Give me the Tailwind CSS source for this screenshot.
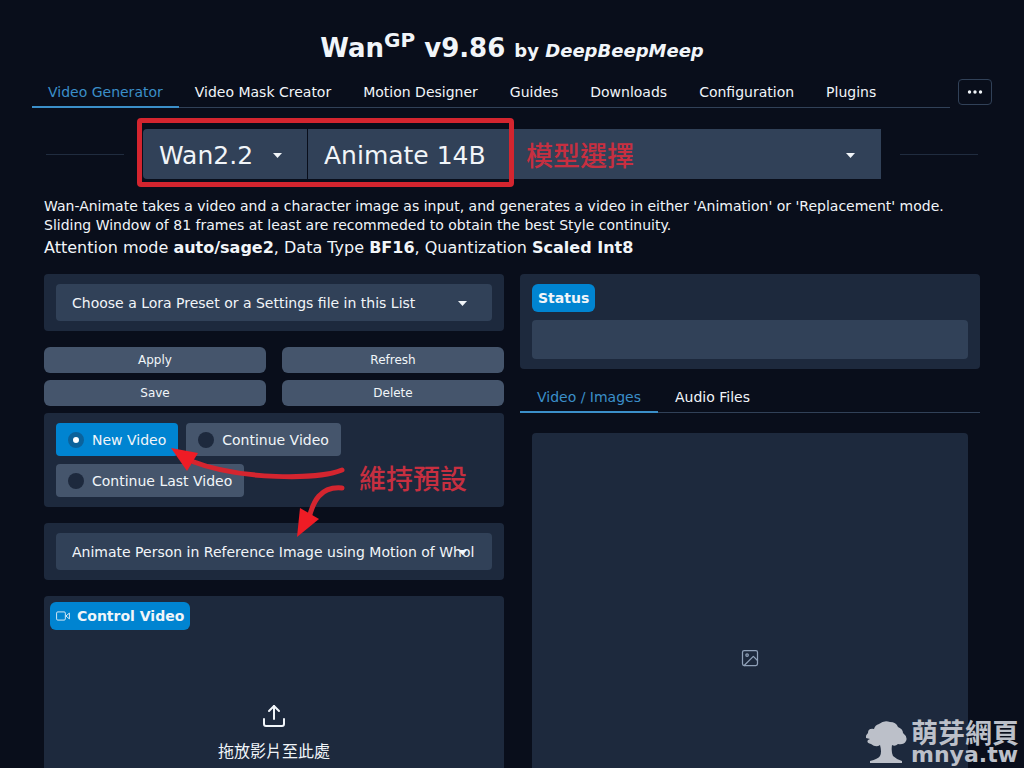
<!DOCTYPE html>
<html lang="zh-Hant">
<head>
  <meta charset="UTF-8">
  <meta name="viewport" content="width=device-width, initial-scale=1.0">
  <title>WanGP</title>
  <script src="https://cdn.jsdelivr.net/npm/@tailwindcss/browser@4"></script>
</head>
<body class="relative h-screen overflow-hidden bg-[#090e1b] px-8 font-['DejaVu_Sans','Noto_Sans_CJK_TC',sans-serif] text-sm text-slate-100">

  <h1 class="pt-8 text-center text-[26px] leading-8 font-bold">
    Wan<sup class="text-xl leading-none">GP</sup> v9.86 <span class="text-lg">by <i>DeepBeepMeep</i></span>
  </h1>

  <!-- main tabs -->
  <div class="mt-[11px] flex items-start gap-2">
    <nav class="flex h-8 flex-1 border-b border-slate-700 whitespace-nowrap">
      <button class="h-8 px-4 text-[#3b8fc9] shadow-[inset_0_-2px_0_#3b8fc9]">Video Generator</button>
      <button class="h-8 px-4">Video Mask Creator</button>
      <button class="h-8 px-4">Motion Designer</button>
      <button class="h-8 px-4">Guides</button>
      <button class="h-8 px-4">Downloads</button>
      <button class="h-8 px-4">Configuration</button>
      <button class="h-8 px-4">Plugins</button>
    </nav>
    <button class="mt-[3px] flex h-[26px] w-[34px] items-center justify-center rounded border border-slate-700" aria-label="More tabs">
      <svg class="h-4 w-4" viewBox="0 0 16 16" fill="currentColor"><circle cx="2.5" cy="8" r="1.7"/><circle cx="8" cy="8" r="1.7"/><circle cx="13.5" cy="8" r="1.7"/></svg>
    </button>
  </div>

  <main class="px-3">
    <!-- model choice -->
    <div class="mt-[21px] flex items-center">
      <hr class="ml-[2px] w-[78px] border-slate-700/60">
      <div class="relative ml-[19px] flex h-[50px] flex-1 gap-px text-[25px]">
        <div class="relative w-[164px]">
          <select aria-label="Model family" class="h-full w-full appearance-none rounded-l bg-slate-700 pt-1 pl-4">
            <option>Wan2.2</option>
          </select>
          <svg class="pointer-events-none absolute top-6 right-[25px] h-[5px] w-[9px]" viewBox="0 0 9 5" fill="currentColor"><path d="M0 0h9L4.500 5z"/></svg>
        </div>
        <div class="relative flex-1">
          <select aria-label="Model" class="h-full w-full appearance-none bg-slate-700 pt-1 pl-4">
            <option>Animate 14B</option>
          </select>
          <svg class="pointer-events-none absolute top-6 right-[26px] h-[5px] w-[9px]" viewBox="0 0 9 5" fill="currentColor"><path d="M0 0h9L4.500 5z"/></svg>
        </div>
        <div class="pointer-events-none absolute -top-[11px] -left-[6px] h-[69px] w-[377px] rounded border-[5px] border-[#d4252f]"></div>
        <span class="absolute top-2 left-[383px] text-[27px] leading-10 font-medium text-[#c72f40]">模型選擇</span>
      </div>
      <hr class="mr-[2px] ml-[19px] w-[78px] border-slate-700/60">
    </div>

    <p class="mt-[18px] leading-[19px]">Wan-Animate takes a video and a character image as input, and generates a video in either 'Animation' or 'Replacement' mode.<br>Sliding Window of 81 frames at least are recommeded to obtain the best Style continuity.</p>
    <p class="text-base leading-[25px]">Attention mode <b>auto/sage2</b>, Data Type <b>BF16</b>, Quantization <b>Scaled Int8</b></p>

    <div class="mt-[14px] grid grid-cols-2 items-start gap-4">
      <!-- settings column -->
      <div class="relative">
        <div class="rounded bg-slate-800 px-3 py-[10px]">
          <div class="relative">
            <select aria-label="Lora preset" class="h-[37px] w-full appearance-none rounded bg-slate-700 px-4">
              <option>Choose a Lora Preset or a Settings file in this List</option>
            </select>
            <svg class="pointer-events-none absolute top-[17px] right-[25px] h-[5px] w-[9px]" viewBox="0 0 9 5" fill="currentColor"><path d="M0 0h9L4.500 5z"/></svg>
          </div>
        </div>

        <div class="mt-4 grid grid-cols-2 gap-x-4 gap-y-[7px] text-xs">
          <button class="h-[26px] rounded-md bg-slate-600">Apply</button>
          <button class="h-[26px] rounded-md bg-slate-600">Refresh</button>
          <button class="h-[26px] rounded-md bg-slate-600">Save</button>
          <button class="h-[26px] rounded-md bg-slate-600">Delete</button>
        </div>

        <div class="mt-[7px] flex flex-wrap gap-2 rounded bg-slate-800 px-3 py-[10px]">
          <label class="flex h-[33px] items-center gap-2 rounded bg-sky-600 px-3">
            <input type="radio" name="start" checked class="h-4 w-4 appearance-none rounded-full border-[5px] border-[#0b629b] bg-white">New Video
          </label>
          <label class="flex h-[33px] items-center gap-2 rounded bg-slate-600 px-3">
            <input type="radio" name="start" class="h-4 w-4 appearance-none rounded-full bg-slate-800">Continue Video
          </label>
          <label class="flex h-[33px] items-center gap-2 rounded bg-slate-600 px-3">
            <input type="radio" name="start" class="h-4 w-4 appearance-none rounded-full bg-slate-800">Continue Last Video
          </label>
        </div>

        <div class="mt-4 rounded bg-slate-800 px-3 py-[10px]">
          <div class="relative">
            <select aria-label="Control process" class="h-[37px] w-full appearance-none rounded bg-slate-700 px-4">
              <option>Animate Person in Reference Image using Motion of Whol</option>
            </select>
            <svg class="pointer-events-none absolute top-[17px] right-[25px] h-[5px] w-[9px]" viewBox="0 0 9 5" fill="currentColor"><path d="M0 0h9L4.500 5z"/></svg>
          </div>
        </div>

        <div class="mt-4 rounded bg-slate-800 p-[6px] pb-24">
          <div class="flex h-7 w-fit items-center gap-[7px] rounded-md bg-sky-600 px-[6px] font-bold">
            <svg class="h-[14px] w-[14px]" viewBox="0 0 24 24" fill="none" stroke="currentColor" stroke-width="1.500" stroke-linejoin="round"><rect x="1" y="5" width="15" height="14" rx="2"/><path d="M23 7l-6 5 6 5z"/></svg>
            Control Video
          </div>
          <button class="mx-auto mt-[74px] flex flex-col items-center gap-3 text-base leading-6">
            <svg class="h-6 w-6" viewBox="0 0 24 24" fill="none" stroke="currentColor" stroke-width="2" stroke-linecap="round" stroke-linejoin="round"><path d="M2 15v5a2 2 0 0 0 2 2h16a2 2 0 0 0 2-2v-5"/><path d="M17 7l-5-5-5 5"/><path d="M12 2v13"/></svg>
            拖放影片至此處
          </button>
        </div>

        <!-- hand-drawn notes over the settings -->
        <svg class="pointer-events-none absolute top-[166px] left-[120px] h-[100px] w-[190px]" viewBox="164 440 190 100" fill="none">
          <path d="M342 470C318 480 240 480 191 461" stroke="#d4252f" stroke-width="5" stroke-linecap="round"/>
          <path d="M171 448L198 453L187 471Z" fill="#ee1c25"/>
          <path d="M342 488C320 486 313 502 309 518" stroke="#d4252f" stroke-width="5" stroke-linecap="round"/>
          <path d="M297 537L300 508L319 519Z" fill="#ee1c25"/>
        </svg>
        <span class="absolute top-[186px] left-[315px] text-[27px] leading-10 font-medium text-[#c72f40]">維持預設</span>
      </div>

      <!-- output column -->
      <div>
        <div class="rounded bg-slate-800 px-3 py-[10px]">
          <label for="status" class="flex h-7 w-fit items-center rounded-md bg-sky-600 px-[6px] font-bold">Status</label>
          <input id="status" type="text" readonly class="mt-2 block h-[39px] w-full rounded bg-slate-700 px-3">
        </div>
        <nav class="mt-3 flex h-8 border-b border-slate-700">
          <button class="h-8 px-[17px] text-[#3b8fc9] shadow-[inset_0_-2px_0_#3b8fc9]">Video / Images</button>
          <button class="h-8 px-[17px]">Audio Files</button>
        </nav>
        <div class="mx-3 mt-5 flex h-[450px] items-center justify-center rounded bg-slate-800 text-slate-400">
          <svg class="h-5 w-5" viewBox="0 0 24 24" fill="none" stroke="currentColor" stroke-width="1.500" stroke-linecap="round" stroke-linejoin="round"><rect x="3" y="3" width="18" height="18" rx="2"/><circle cx="8.500" cy="8.500" r="1.500"/><path d="M5 21L16 10l5 5"/></svg>
        </div>
      </div>
    </div>
  </main>

  <!-- site mark -->
  <div class="absolute right-[5px] bottom-[5px] flex items-center gap-1 text-[#bcc0c9]">
    <svg class="h-[42px] w-[41px]" viewBox="0 0 41 42" fill="currentColor"><path d="M13 3Q18-1 24 1Q30 1 32 6Q37 8 37 12Q42 16 40 20Q38 24 32 23Q29 26 26 24Q25 31 27 35Q30 38 36 40V42H4V40Q12 38 14 35Q16 31 14 24Q10 27 5 23Q0 22 2 19L4 18L0 17Q-1 15 2 12Q2 7 8 8Q9 4 13 3Z"/></svg>
    <div class="font-bold">
      <div class="text-[27px] leading-[26px]">萌芽網頁</div>
      <div class="text-[22px] leading-4">mnya.tw</div>
    </div>
  </div>
</body>
</html>
